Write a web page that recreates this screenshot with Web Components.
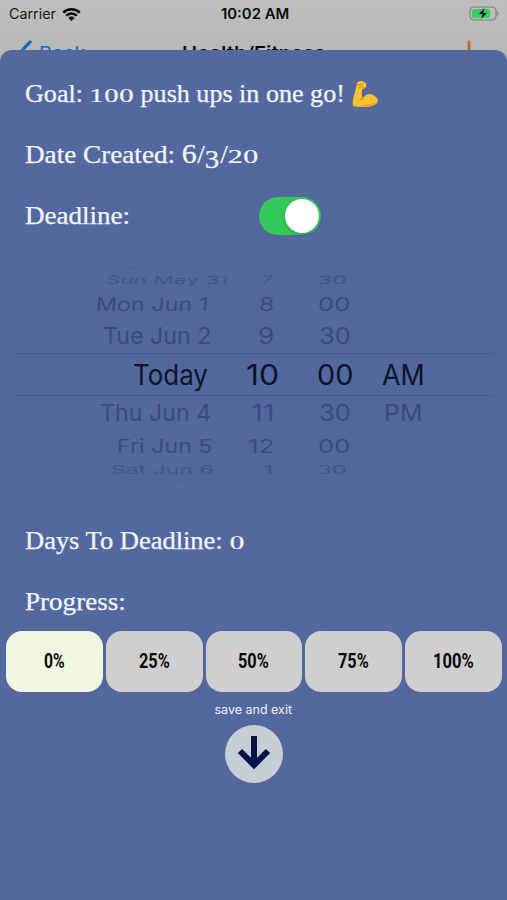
<!DOCTYPE html>
<html lang="en">
<head>
<meta charset="utf-8">
<meta name="viewport" content="width=device-width">
<title>Goal</title>
<style>
  html, body { margin: 0; height: 900px; overflow: hidden; }
  body { background: #b7bab7; font-family: Inter, "Liberation Sans", sans-serif; }
</style>
</head>
<body>
<goal-screen></goal-screen>

<script>
// One line of text, stretched to a given width
class FitText extends HTMLElement {
    constructor() {
        super();
        this.attachShadow({ mode: 'open' });
    }

    connectedCallback() {
        const size = this.getAttribute('size');
        const width = this.getAttribute('width');
        this.shadowRoot.innerHTML = `
            <style>
                :host { display: block; flex: none; width: ${width}px; height: ${size}px; font-size: ${size}px; line-height: ${size}px; white-space: nowrap; }
                span { display: inline-block; transform-origin: 0 50%; }
            </style>
            <span><slot></slot></span>
        `;
        const span = this.shadowRoot.querySelector('span');
        const skew = this.getAttribute('skew') || 0;
        span.style.transform = `skewX(${skew}deg) scale(${width / span.offsetWidth}, ${this.getAttribute('squash') || 1})`;
    }
}

// Old-style figure: x-height digits, optionally dropped below the baseline
class OldFigure extends HTMLElement {
    constructor() {
        super();
        this.attachShadow({ mode: 'open' });
        this.shadowRoot.innerHTML = `
            <style>
                :host { line-height: 1; }
                span { display: inline-block; transform-origin: 0 79%; transform: scale(1.1, .74); }
                :host([drop]) span { transform: translateY(.2em) scale(1.06, 1); }
                :host([tall]) span { transform: scale(1.1, 1.05); }
            </style>
            <span><slot></slot></span>
        `;
    }
}

class StatusBar extends HTMLElement {
    constructor() {
        super();
        this.attachShadow({ mode: 'open' });
        this.shadowRoot.innerHTML = `
            <style>
                :host { display: grid; grid-template-columns: 1fr auto 1fr; align-items: center; height: 28px; padding: 0 7px 0 9px; color: #161818; }
                .left { display: flex; align-items: center; gap: 6px; }
                .time { font-weight: 600; color: #0c0d0d; }
                .battery { justify-self: end; }
                svg { display: block; }
            </style>
            <div class="left">
                <fit-text size="14" width="47">Carrier</fit-text>
                <svg width="19" height="15" viewBox="0 0 19 15" fill="none" stroke="#050606" stroke-width="2.6">
                    <path d="M1.3 5.6a11.6 11.6 0 0 1 16.4 0"/>
                    <path d="M4.2 8.7a7.5 7.5 0 0 1 10.6 0"/>
                    <path d="M9.5 14 6.4 10.9a4.4 4.4 0 0 1 6.2 0z" fill="#050606" stroke="none"/>
                </svg>
            </div>
            <fit-text class="time" size="14" width="68">10:02 AM</fit-text>
            <svg class="battery" width="31" height="16" viewBox="0 0 31 16">
                <rect x="1" y="1" width="26" height="13" rx="4" fill="none" stroke="#7c807d" stroke-width="1.2"/>
                <rect x="3" y="3" width="18" height="9" rx="2" fill="#35cf60"/>
                <path d="M28.3 5q2.6 2.5 0 5z" fill="#7c807d"/>
                <path d="M15.8 1.4 9.4 8.3h4l-1.6 5.5 6.6-7h-4z" fill="#050606" stroke="#5fc77d" stroke-width=".6"/>
            </svg>
        `;
    }
}

class NavBar extends HTMLElement {
    constructor() {
        super();
        this.attachShadow({ mode: 'open' });
        this.shadowRoot.innerHTML = `
            <style>
                :host { display: grid; grid-template-columns: 1fr auto 1fr; align-items: center; height: 50px; padding: 0 18px; }
                .back { display: flex; align-items: center; gap: 6px; color: #1769c0; }
                .title { font-weight: 600; color: #090a0a; }
                .add { justify-self: end; margin-right: 8px; }
            </style>
            <div class="back">
                <svg width="15" height="27" viewBox="0 0 15 27" fill="none" stroke="#1769c0" stroke-width="3.2" stroke-linecap="round"><path d="M12 2 2 12.5 12 25"/></svg>
                <fit-text size="19" width="46">Back</fit-text>
            </div>
            <fit-text class="title" size="18.5" width="143">Health/Fitness</fit-text>
            <svg class="add" width="24" height="28" viewBox="0 0 24 28" stroke="#bd6d17" stroke-width="2.8" stroke-linecap="round"><path d="M12 3v22M1 14h22"/></svg>
        `;
    }
}

class ToggleSwitch extends HTMLElement {
    constructor() {
        super();
        this.attachShadow({ mode: 'open' });
        this.shadowRoot.innerHTML = `
            <style>
                :host { display: flex; justify-content: flex-end; box-sizing: border-box; width: 62px; height: 38px; padding: 2px; border-radius: 19px; background: #35c759; }
                i { width: 34px; height: 34px; border-radius: 50%; background: #fff; box-shadow: 0 2px 4px rgba(0, 0, 0, .16); }
            </style>
            <i></i>
        `;
    }
}

// Each wheel row: height, font size, vertical squash, skew, colour, [text, left, width]
const WHEEL_ROWS = [
    [10, 10, .22, 0, '#4f6199', [['Sat May 30', 113, 113], ['6', 260, 10], ['00', 316, 28]]],
    [14, 16, .72, -8, '#445688', [['Sun May 31', 106, 123], ['7', 260, 13], ['30', 317, 30]]],
    [33, 20, .95, -4, '#3c4d7d', [['Mon Jun 1', 96, 112], ['8', 259, 15], ['00', 318, 32]]],
    [33, 23, 1, 0, '#3c4c7b', [['Tue Jun 2', 103, 108], ['9', 258, 16], ['30', 319, 32]]],
    [41, 28, 1, 0, '#0c1525', [['Today', 133, 75], ['10', 246, 33], ['00', 317, 36], ['AM', 382, 43]]],
    [34, 23, 1, 0, '#3c4c7b', [['Thu Jun 4', 100, 111], ['11', 251, 24], ['30', 319, 32], ['PM', 384, 38]]],
    [32, 20, .95, 0, '#3c4d7d', [['Fri Jun 5', 117, 95], ['12', 248, 26], ['00', 318, 32]]],
    [15, 16, .74, 0, '#445688', [['Sat Jun 6', 111, 102], ['1', 263, 11], ['30', 317, 30]]],
    [7, 10, .2, 0, '#4f6199', [['Sun Jun 7', 112, 98], ['2', 265, 9], ['00', 316, 28]]]
];

class DateWheel extends HTMLElement {
    constructor() {
        super();
        this.attachShadow({ mode: 'open' });
    }

    connectedCallback() {
        const rows = WHEEL_ROWS.map(([height, size, squash, skew, color, cells], i) => {
            let edge = 16;
            const texts = cells.map(([text, left, width]) => {
                const margin = left - edge;
                edge = left + width;
                return `<fit-text size="${size}" width="${width}" squash="${squash}" skew="${skew}" style="margin-left:${margin}px">${text}</fit-text>`;
            }).join('');
            return `<div class="row ${i === 4 ? 'current' : ''}" style="height:${height}px;color:${color}">${texts}</div>`;
        }).join('');
        this.shadowRoot.innerHTML = `
            <style>
                :host { display: block; padding: 0 14px 0 16px; }
                .row { display: flex; align-items: center; }
                .current { border: solid #485a91; border-width: 1px 0; }
            </style>
            ${rows}
        `;
    }
}

class ProgressOption extends HTMLElement {
    constructor() {
        super();
        this.attachShadow({ mode: 'open' });
        this.shadowRoot.innerHTML = `
            <style>
                :host { display: flex; flex: 1; align-items: center; justify-content: center; height: 61px; border-radius: 16px; background: #cecece; color: #090909; font-family: Roboto, sans-serif; font-weight: 700; }
                :host([selected]) { background: #f1f6df; }
            </style>
            <slot></slot>
        `;
    }
}

class SaveButton extends HTMLElement {
    constructor() {
        super();
        this.attachShadow({ mode: 'open' });
        this.shadowRoot.innerHTML = `
            <style>
                :host { display: flex; flex-direction: column; align-items: center; gap: 8px; color: #f0f3fb; }
                div { width: 58px; height: 58px; border-radius: 50%; background: #c5cdd5; }
                svg { display: block; }
            </style>
            <fit-text size="12.5" width="78"><slot></slot></fit-text>
            <div>
                <svg width="58" height="58" viewBox="0 0 58 58" fill="none" stroke="#06114a" stroke-width="6"><path d="M29 11v29M15 26l14 14 14-14"/></svg>
            </div>
        `;
    }
}

class GoalSheet extends HTMLElement {
    constructor() {
        super();
        this.attachShadow({ mode: 'open' });
        this.shadowRoot.innerHTML = `
            <style>
                :host { display: block; position: relative; height: 850px; margin-top: -28px; border-radius: 12px 12px 0 0; background: #5468a0; color: #f3f7ff; }
                .line { display: flex; align-items: center; height: 61px; padding-left: 25px; font-family: "Liberation Serif", serif; -webkit-text-stroke: .25px #f3f7ff; }
                .first { padding-top: 13px; }
                .arm { margin-left: 7px; }
                old-figure { display: inline-block; width: .57em; }
                toggle-switch { margin-left: 129px; }
                date-wheel { margin: 17px 0 26px; }
                .options { display: flex; gap: 3px; margin-top: -1px; padding: 0 5px 0 6px; }
                save-button { margin-top: 12px; }
            </style>
            <div class="line first">
                <fit-text size="26" width="320">Goal: <old-figure>1</old-figure><old-figure>0</old-figure><old-figure>0</old-figure> push ups in one go!</fit-text>
                <svg class="arm" width="27" height="28" viewBox="0 0 27 28">
                    <path d="M5 3C6 1 10 0 12 2c3 1 3 4 1 6-1 1-3 1-3 2 0 3-1 5 1 8 2-4 7-5 10-3 4 2 6 5 4 8-4 4-9 4-14 4-4 0-8 0-10-1-1-5 1-10 2-14Q4 7 5 3z" fill="#fcc331"/>
                    <path d="M1 25c5 1 9 1 14-1 4 0 7 0 10-3-3 7-11 6-17 6-3 0-6 0-7-2z" fill="#eca51d"/>
                    <path d="M5.5 5.5c2-2 4 0 5-2M7 8q3-3 5 0M11 18q-2 1-3 2" fill="none" stroke="#da8d13" stroke-width="1.1" stroke-linecap="round"/>
                </svg>
            </div>
            <div class="line"><fit-text size="26" width="234">Date Created: <old-figure tall>6</old-figure>/<old-figure drop>3</old-figure>/<old-figure>2</old-figure><old-figure>0</old-figure></fit-text></div>
            <div class="line"><fit-text size="26" width="105">Deadline:</fit-text><toggle-switch></toggle-switch></div>
            <date-wheel></date-wheel>
            <div class="line"><fit-text size="26" width="219">Days To Deadline: <old-figure>0</old-figure></fit-text></div>
            <div class="line"><fit-text size="26" width="101">Progress:</fit-text></div>
            <div class="options">
                <progress-option selected><fit-text size="21" width="21">0%</fit-text></progress-option>
                <progress-option><fit-text size="21" width="31">25%</fit-text></progress-option>
                <progress-option><fit-text size="21" width="31">50%</fit-text></progress-option>
                <progress-option><fit-text size="21" width="31">75%</fit-text></progress-option>
                <progress-option><fit-text size="21" width="41">100%</fit-text></progress-option>
            </div>
            <save-button>save and exit</save-button>
        `;
    }
}

class GoalScreen extends HTMLElement {
    constructor() {
        super();
        this.attachShadow({ mode: 'open' });
        this.shadowRoot.innerHTML = `
            <style>
                :host { display: block; height: 900px; overflow: hidden; background: linear-gradient(#bcbebb, #b5b8b5 60px); }
            </style>
            <status-bar></status-bar>
            <nav-bar></nav-bar>
            <goal-sheet></goal-sheet>
        `;
    }
}

customElements.define('old-figure', OldFigure);
customElements.define('fit-text', FitText);
customElements.define('status-bar', StatusBar);
customElements.define('nav-bar', NavBar);
customElements.define('toggle-switch', ToggleSwitch);
customElements.define('date-wheel', DateWheel);
customElements.define('progress-option', ProgressOption);
customElements.define('save-button', SaveButton);
customElements.define('goal-sheet', GoalSheet);
customElements.define('goal-screen', GoalScreen);
</script>
</body>
</html>
